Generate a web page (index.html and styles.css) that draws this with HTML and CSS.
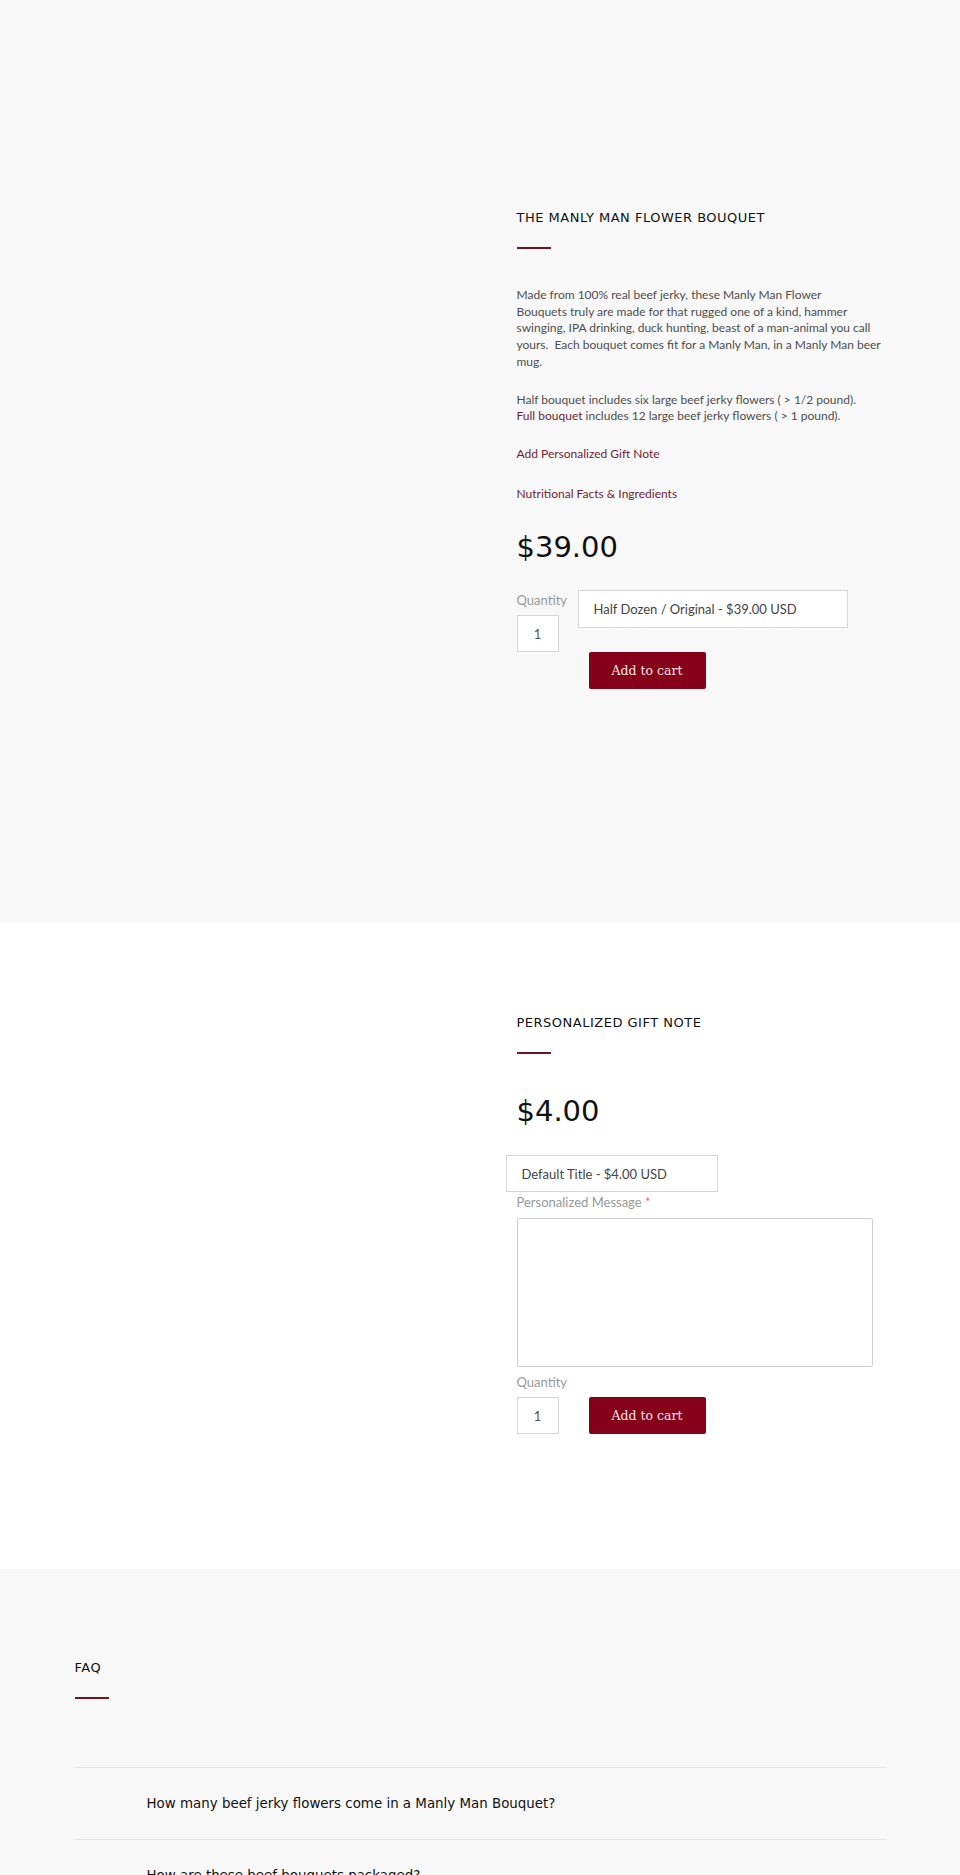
FILE: index.html
```html
<!DOCTYPE html>
<html lang="en">
<head>
<meta charset="utf-8">
<title>The Manly Man Flower Bouquet</title>
<link rel="stylesheet" href="styles.css">
</head>
<body>
<section class="band band-grey product-band">
  <div class="container product-grid">
    <div class="media"></div>
    <div class="info">
      <h1 class="heading">The Manly Man Flower Bouquet</h1>
      <div class="rule"></div>
      <p class="desc first">Made from 100% real beef jerky, these Manly Man Flower<br>Bouquets truly are made for that rugged one of a kind, hammer swinging, IPA drinking, duck hunting, beast of a man-animal you call yours.&nbsp; Each bouquet comes fit for a Manly Man, in a Manly Man beer mug.</p>
      <p class="desc">Half bouquet includes six large beef jerky flowers ( &gt; 1/2 pound).<br><a class="link" href="#">Full bouquet</a> includes 12 large beef jerky flowers ( &gt; 1 pound).</p>
      <p class="desc"><a class="link" href="#">Add Personalized Gift Note</a></p>
      <p class="desc nutrition"><a class="link" href="#">Nutritional Facts &amp; Ingredients</a></p>
      <div class="price">$39.00</div>
      <div class="buy-row">
        <div class="qty-col">
          <label class="field-label">Quantity</label>
          <input class="qty" type="text" value="1">
        </div>
        <div class="variant-col">
          <select class="variant wide"><option>Half Dozen / Original - $39.00 USD</option></select>
          <button class="cart-btn offset">Add to cart</button>
        </div>
      </div>
    </div>
  </div>
</section>

<section class="band band-white note-band">
  <div class="container product-grid">
    <div class="media"></div>
    <div class="info">
      <h2 class="heading">Personalized Gift Note</h2>
      <div class="rule"></div>
      <div class="price note-price">$4.00</div>
      <select class="variant narrow"><option>Default Title - $4.00 USD</option></select>
      <label class="field-label msg-label">Personalized Message <span class="req">*</span></label>
      <textarea class="message"></textarea>
      <label class="field-label qty-label">Quantity</label>
      <div class="note-row">
        <input class="qty" type="text" value="1">
        <button class="cart-btn">Add to cart</button>
      </div>
    </div>
  </div>
</section>

<section class="band band-grey faq-band">
  <div class="container">
    <h2 class="heading">FAQ</h2>
    <div class="rule"></div>
    <ul class="faq-list">
      <li class="faq-item">How many beef jerky flowers come in a Manly Man Bouquet?</li>
      <li class="faq-item">How are these beef bouquets packaged?</li>
      <li class="faq-item">How long will the beef jerky flowers last?</li>
    </ul>
  </div>
</section>
</body>
</html>
```

FILE: styles.css
```css
* { box-sizing: border-box; }

body {
  margin: 0;
  font-family: Lato, "Liberation Sans", sans-serif;
  color: #555;
  background: #fff;
}

.band-grey { background: #f8f8f8; }
.band-white { background: #fff; }

.product-band { padding: 208px 0 234px; }
.note-band { padding: 90px 0 135px; }
.faq-band { padding: 89px 0 40px; }

.container {
  width: 811px;
  margin: 0 auto;
}

.product-grid {
  display: grid;
  grid-template-columns: 442px 1fr;
}

.info {
  display: flex;
  flex-direction: column;
  align-items: flex-start;
}

.heading {
  margin: 0;
  font-family: "DejaVu Sans", sans-serif;
  font-weight: normal;
  font-size: 13px;
  line-height: 20px;
  letter-spacing: 0.5px;
  text-transform: uppercase;
  color: #111;
}

.rule {
  width: 34px;
  height: 2px;
  margin-top: 19px;
  background: #6d1622;
}

.desc {
  margin: 21px 0 0;
  font-size: 12px;
  line-height: 16.7px;
  color: #4e4e4e;
}

.desc.first { margin-top: 38px; }
.desc.nutrition { margin-top: 23px; }

.link {
  color: #6e2435;
  text-decoration: none;
}

.price {
  margin-top: 27px;
  font-family: "DejaVu Sans", sans-serif;
  font-size: 29px;
  line-height: 36px;
  color: #111;
}

.buy-row {
  display: flex;
  gap: 12px;
  margin-top: 25px;
}

.qty-col {
  display: flex;
  flex-direction: column;
  width: 49px;
}

.field-label {
  display: block;
  font-size: 13px;
  line-height: 16px;
  color: #999;
}

.qty-col .field-label { margin-top: 2px; }

.qty {
  width: 42px;
  height: 37px;
  margin: 7px 0 0;
  padding: 0;
  border: 1px solid #d6d6d6;
  background: #fff;
  font-family: Lato, "Liberation Sans", sans-serif;
  font-size: 13px;
  color: #555;
  text-align: center;
}

.variant-col {
  display: flex;
  flex-direction: column;
  align-items: flex-start;
}

.variant {
  appearance: none;
  -webkit-appearance: none;
  height: 38px;
  margin: 0;
  padding: 0 15px;
  border: 1px solid #d6d6d6;
  border-radius: 0;
  background: #fff;
  font-family: Lato, "Liberation Sans", sans-serif;
  font-size: 13px;
  color: #444;
}

.variant.wide { width: 270px; }

.variant.narrow {
  width: 212px;
  height: 37px;
  margin: 26px 0 0 -11px;
}

.cart-btn {
  width: 117px;
  height: 37px;
  margin: 0;
  padding: 0;
  border: 0;
  border-radius: 2px;
  background: #850019;
  color: #f5e4e4;
  font-family: "DejaVu Serif", serif;
  font-size: 12.5px;
}

.cart-btn.offset { margin: 24px 0 0 11px; }

.note-price { margin-top: 39px; }

.msg-label { margin-top: 2px; }

.req { color: #d9707a; }

.message {
  display: block;
  width: 356px;
  height: 149px;
  margin-top: 8px;
  border: 1px solid #d0d0d0;
  border-radius: 2px;
  background: #fff;
  resize: none;
}

.qty-label { margin-top: 7px; }

.note-row {
  display: flex;
  gap: 30px;
  margin-top: 7px;
}

.note-row .qty { margin: 0; }

.faq-list {
  list-style: none;
  margin: 68px 0 0;
  padding: 0;
}

.faq-item {
  padding: 26px 0 25px 72px;
  border-top: 1px solid #e6e6e6;
  font-family: "DejaVu Sans", sans-serif;
  font-size: 13.4px;
  line-height: 20px;
  color: #111;
}
```
